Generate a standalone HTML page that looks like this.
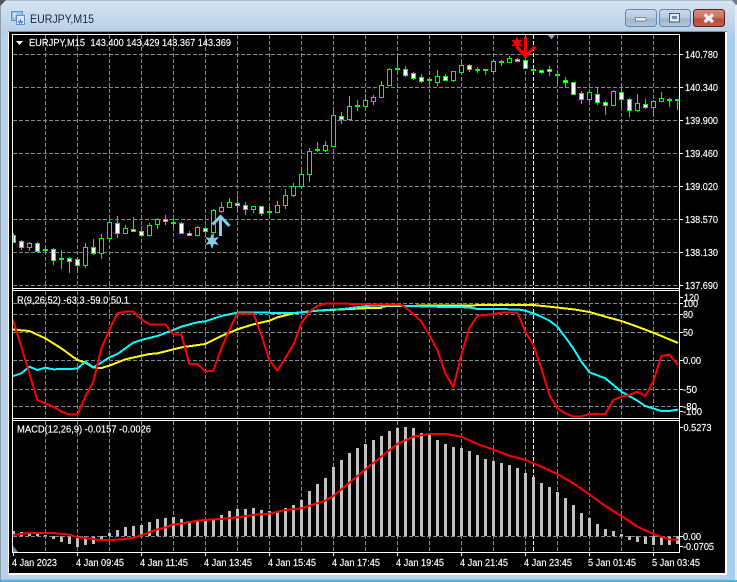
<!DOCTYPE html>
<html><head><meta charset="utf-8"><title>EURJPY,M15</title>
<style>
html,body{margin:0;padding:0;background:#b9d1ea;width:737px;height:582px;overflow:hidden}
svg{display:block}
text{font-family:"Liberation Sans",sans-serif;font-size:10.5px;fill:#fff;stroke:#fff;stroke-width:.15px}
.g{stroke:#778899;stroke-width:1;stroke-dasharray:4 2;fill:none}
.l{fill:none;stroke-linejoin:round;stroke-linecap:round;shape-rendering:crispEdges}
</style></head><body>
<svg width="737" height="582" viewBox="0 0 737 582" xmlns="http://www.w3.org/2000/svg">
<defs>
<linearGradient id="tb" x1="0" y1="0" x2="0" y2="1"><stop offset="0" stop-color="#d6e4f2"/><stop offset="1" stop-color="#b4cee8"/></linearGradient>
<linearGradient id="bt" x1="0" y1="0" x2="0" y2="1"><stop offset="0" stop-color="#cbdaea"/><stop offset=".5" stop-color="#b5cae0"/><stop offset=".55" stop-color="#9db5cf"/><stop offset="1" stop-color="#b0c7df"/></linearGradient>
<linearGradient id="cb" x1="0" y1="0" x2="0" y2="1"><stop offset="0" stop-color="#d98f82"/><stop offset=".5" stop-color="#c96e5e"/><stop offset=".55" stop-color="#b54e3c"/><stop offset="1" stop-color="#c2604c"/></linearGradient>
</defs>
<rect width="737" height="582" fill="#b9d1ea"/>
<rect x="1" y="1" width="734" height="33" fill="url(#tb)"/>
<path d="M0 6L5 0H732L736 5V580H0Z" fill="none" stroke="#9aa9b8"/>
<rect x="0" y="0" width="1" height="582" fill="#8f9dab"/>
<rect x="727" y="34" width="8" height="546" fill="#a9cdee"/>
<rect x="735" y="5" width="2" height="575" fill="#e8eef4"/>
<rect x="0" y="580" width="737" height="2" fill="#4ab6dc"/>
<path d="M0 0H6L0 6Z" fill="#555"/>
<path d="M732 0H737V5Z" fill="#777"/>

<rect x="8" y="31" width="719" height="544" fill="#fff"/>
<rect x="8" y="31" width="719" height="1" fill="#8a8f96"/>
<rect x="9" y="32" width="716" height="541" fill="#000"/>

<!-- title icon -->
<g>
<rect x="11.5" y="11.5" width="11" height="9" fill="#9cc3ea" stroke="#5f8fc4"/>
<rect x="16.5" y="15.5" width="8" height="9" fill="#dcebfa" stroke="#5f8fc4"/>
<path d="M18 21l1.5 2 1-3 1 3 1.5-2" stroke="#3f6fae" fill="none"/>
<path d="M13 14h3M13 16h2" stroke="#fff"/>
</g>
<text x="30" y="23" textLength="64" lengthAdjust="spacingAndGlyphs" style="font-size:11.5px;fill:#1c2a38;stroke:none">EURJPY,M15</text>

<!-- buttons -->
<rect x="625.5" y="9.5" width="31" height="17" rx="3" fill="url(#bt)" stroke="#6c88a6"/>
<rect x="635.5" y="17.5" width="10.500" height="3.5" fill="#e8eef4" stroke="#566a80" stroke-width=".7"/>
<rect x="659.5" y="9.5" width="31" height="17" rx="3" fill="url(#bt)" stroke="#6c88a6"/>
<rect x="669.5" y="13.5" width="10" height="8.5" fill="#dfe8f1" stroke="#4a5d72"/>
<rect x="672" y="16" width="5" height="3" fill="#6f88a5"/>
<rect x="693.5" y="9.5" width="31" height="17" rx="3" fill="url(#cb)" stroke="#5a1f1c"/>
<path d="M704.5 14.5l8.500 7.500M713 14.5l-8.500 7.500" stroke="#f3f3f3" stroke-width="3.2"/>

<!-- grid -->
<g class="g">
<path d="M13 54.5H679M13 87.5H679M13 120.5H679M13 153.5H679M13 186.5H679M13 219.5H679M13 252.5H679M13 285.5H679"/>
<path d="M13 303.5H679M13 314.5H679M13 332.5H679M13 360.5H679M13 389.5H679M13 406.5H679"/>
<path d="M13 536.5H679"/>
<path d="M45.5 35V288M77.5 35V288M109.5 35V288M141.5 35V288M173.5 35V288M205.5 35V288M237.5 35V288M269.5 35V288M301.5 35V288M333.5 35V288M365.5 35V288M397.5 35V288M429.5 35V288M461.5 35V288M493.5 35V288M525.5 35V288M557.5 35V288M589.5 35V288M621.5 35V288M653.5 35V288"/>
<path d="M45.5 291V418M77.5 291V418M109.5 291V418M141.5 291V418M173.5 291V418M205.5 291V418M237.5 291V418M269.5 291V418M301.5 291V418M333.5 291V418M365.5 291V418M397.5 291V418M429.5 291V418M461.5 291V418M493.5 291V418M525.5 291V418M557.5 291V418M589.5 291V418M621.5 291V418M653.5 291V418"/>
<path d="M45.5 421V552M77.5 421V552M109.5 421V552M141.5 421V552M173.5 421V552M205.5 421V552M237.5 421V552M269.5 421V552M301.5 421V552M333.5 421V552M365.5 421V552M397.5 421V552M429.5 421V552M461.5 421V552M493.5 421V552M525.5 421V552M557.5 421V552M589.5 421V552M621.5 421V552M653.5 421V552"/>
</g>
<path d="M533.5 35V288M533.5 291V418M533.5 421V552" stroke="#fff" stroke-dasharray="4 2" fill="none"/>

<!-- candle wicks -->
<path fill="none" stroke="#00ff00" d="M13.5 233V243M21.5 240V250M29.5 242V251M37.5 242V252M45.5 245V253M53.5 248V265M61.5 250V269M69.5 257V273M77.5 258V272M85.5 243V268M93.5 239V255M101.5 234V259M109.5 220V242M117.5 216V238M125.5 225V233M133.5 217V232M141.5 226V235M149.5 223V235M157.5 218V229M165.5 215V225M173.5 218V228M181.5 222V234M189.5 231V236M197.5 226V236M205.5 226V233M213.5 209V237M221.5 202V213M229.5 198V207M237.5 196V211M245.5 202V215M253.5 206V213M261.5 206V216M269.5 207V218M277.5 201V213M285.5 189V209M293.5 183V197M301.5 171V189M309.5 148V182M317.5 142V152M325.5 141V152M333.5 110V146M341.5 112V124M349.5 96V119M357.5 100V111M365.5 94V107M373.5 95V105M381.5 81V98M389.5 68V85M397.5 57V72M405.5 66V77M413.5 72V80M421.5 74V83M429.5 77V85M437.5 70V86M445.5 74V81M453.5 71V82M461.5 59V72M469.5 64V72M477.5 67V73M485.5 69V75M493.5 60V73M501.5 60V66M509.5 56V63M517.5 58V62M525.5 58V68M533.5 68V72M541.5 70V74M549.5 66V76M557.5 70V84M565.5 77V88M573.5 82V95M581.5 91V104M589.5 91V102M597.5 88V105M605.5 101V115M613.5 90V105M621.5 88V108M629.5 98V117M637.5 94V112M645.5 99V109M653.5 100V115M661.5 92V101M669.5 98V107M677.5 100V110"/>
<!-- bull bodies (hollow) -->
<path fill="#000" stroke="#00ff00" d="M27.5 243.5h4v4h-4zM83.5 247.5h4v18h-4zM99.5 238.5h4v15h-4zM107.5 222.5h4v16h-4zM123.5 228.5h4v5h-4zM147.5 225.5h4v10h-4zM155.5 219.5h4v5h-4zM195.5 227.5h4v8h-4zM211.5 210.5h4v22h-4zM219.5 207.5h4v4h-4zM227.5 202.5h4v5h-4zM251.5 206.5h4v3h-4zM275.5 205.5h4v7h-4zM283.5 195.5h4v10h-4zM291.5 186.5h4v9h-4zM299.5 174.5h4v12h-4zM307.5 151.5h4v23h-4zM323.5 145.5h4v5h-4zM331.5 115.5h4v31h-4zM347.5 106.5h4v13h-4zM363.5 100.5h4v6h-4zM371.5 97.5h4v4h-4zM379.5 85.5h4v12h-4zM387.5 69.5h4v16h-4zM435.5 76.5h4v6h-4zM451.5 71.5h4v9h-4zM459.5 65.5h4v7h-4zM491.5 61.5h4v10h-4zM507.5 58.5h4v4h-4zM587.5 92.5h4v7h-4zM611.5 91.5h4v14h-4zM635.5 103.5h4v7h-4zM651.5 101.5h4v6h-4zM659.5 98.5h4v3h-4z"/>
<!-- bear bodies (filled) -->
<path fill="#fff" stroke="#00ff00" d="M13.5 235.5h2v7h-2zM19.5 241.5h4v6h-4zM35.5 243.5h4v8h-4zM51.5 249.5h4v11h-4zM67.5 258.5h4v3h-4zM75.5 259.5h4v6h-4zM91.5 247.5h4v6h-4zM115.5 223.5h4v10h-4zM131.5 229.5h4v2h-4zM139.5 231.5h4v4h-4zM163.5 219.5h4v2h-4zM179.5 223.5h4v10h-4zM187.5 233.5h4v2h-4zM203.5 228.5h4v3h-4zM235.5 203.5h4v2h-4zM243.5 205.5h4v4h-4zM259.5 206.5h4v7h-4zM339.5 116.5h4v3h-4zM403.5 69.5h4v6h-4zM411.5 73.5h4v5h-4zM419.5 77.5h4v4h-4zM443.5 76.5h4v4h-4zM467.5 65.5h4v4h-4zM515.5 59.5h4v2h-4zM523.5 60.5h4v8h-4zM539.5 70.5h4v2h-4zM547.5 69.5h4v2h-4zM563.5 80.5h4v2h-4zM571.5 82.5h4v12h-4zM579.5 93.5h4v6h-4zM595.5 94.5h4v8h-4zM603.5 102.5h4v3h-4zM619.5 92.5h4v7h-4zM627.5 99.5h4v11h-4zM643.5 104.5h4v3h-4z"/>
<!-- doji -->
<path fill="none" stroke="#00ff00" stroke-width="2" d="M43 250h5M59 259h5M171 223h5M267 212h5M315 150h5M355 106h5M395 69h5M427 80h5M475 70h5M483 70h5M499 62h5M531 70h5M555 75h5M667 100h5M675 100h5"/>

<!-- arrows -->
<g fill="none" stroke="#87ceeb" stroke-width="3">
<path d="M220.5 236V216M212.5 224.5L220.5 216.5L229.5 226"/>
</g>
<polygon fill="#87ceeb" points="212,233 213.75,238 218.9,237 215.5,241 218.9,245 213.75,244 212,249 210.25,244 205.1,245 208.5,241 205.1,237 210.25,238"/>
<g fill="none" stroke="#ff0000" stroke-width="3">
<path d="M525.5 37V57M516.5 46.5L525.5 56.5L535 46.5"/>
</g>
<polygon fill="#ff0000" points="517,36 518.5,40.4 523.1,39.5 520,43 523.1,46.5 518.5,45.6 517,50 515.5,45.6 510.9,46.5 514,43 510.9,39.5 515.5,40.4"/>
<path d="M547 34H556L551.5 39.5Z" fill="#8a96a3"/>

<!-- panel 1 lines -->
<g class="l" stroke-width="6" transform="translate(0,280) scale(.33333)">
<polyline stroke="#ffff00" points="40,149 88,153 136,175 184,205 232,240 256,248 280,263 304,264 328,257 376,238 448,222 472,220 544,202 616,192 664,168 712,148 760,133 808,122 832,112 880,100 952,92 1110,84 1144,84 1144,79 1264,77 1410,76 1480,75 1600,75 1648,80 1720,88 1768,96 1816,110 1864,123 1912,140 1960,158 2008,178 2032,188"/>
<polyline stroke="#00ffff" points="40,288 64,280 88,260 112,270 136,263 160,268 232,266 256,245 280,262 304,248 328,232 352,222 376,205 400,188 424,180 472,168 520,150 544,140 592,127 616,124 664,108 712,98 784,98 880,99 976,90 1030,87 1110,77 1200,77 1336,81 1408,82 1432,87 1552,88 1576,92 1600,100 1624,110 1648,122 1672,140 1696,172 1720,205 1744,245 1768,277 1816,295 1864,335 1912,362 1936,378 1984,393 2008,393 2032,389"/>
<polyline stroke="#ff0000" points="40,122 64,200 88,280 112,360 136,370 160,380 184,395 208,404 232,404 256,350 280,305 304,205 328,150 352,100 376,95 400,95 424,118 448,133 496,133 520,163 544,163 568,252 592,252 616,275 640,272 664,205 688,150 712,100 760,100 784,165 808,240 832,272 880,195 904,130 928,95 952,78 976,70 1000,70 1110,73 1200,73 1216,82 1240,102 1264,125 1288,165 1312,210 1336,280 1360,322 1384,225 1408,145 1432,108 1480,102 1504,98 1552,98 1576,155 1600,195 1624,265 1648,345 1672,385 1696,400 1720,410 1744,410 1768,402 1816,402 1840,360 1864,350 1888,345 1912,335 1936,348 1960,305 1984,228 2008,224 2032,252"/>
</g>

<!-- MACD histogram -->
<path fill="none" stroke="#c0c0c0" stroke-width="3" d="M13.5 531V536M21.5 532V536M29.5 533V536M37.5 533V536M45.5 535V536M53.5 536V539M61.5 536V542M69.5 536V544M77.5 536V547M85.5 536V545M93.5 536V544M101.5 536V539M109.5 533V536M117.5 530V536M125.5 527V536M133.5 526V536M141.5 525V536M149.5 522V536M157.5 519V536M165.5 518V536M173.5 517V536M181.5 519V536M189.5 521V536M197.5 521V536M205.5 521V536M213.5 519V536M221.5 515V536M229.5 511V536M237.5 509V536M245.5 509V536M253.5 508V536M261.5 510V536M269.5 511V536M277.5 511V536M285.5 508V536M293.5 505V536M301.5 500V536M309.5 491V536M317.5 484V536M325.5 478V536M333.5 467V536M341.5 460V536M349.5 453V536M357.5 448V536M365.5 444V536M373.5 440V536M381.5 436V536M389.5 431V536M397.5 428V536M405.5 427V536M413.5 428V536M421.5 433V536M429.5 434V536M437.5 440V536M445.5 444V536M453.5 447V536M461.5 448V536M469.5 451V536M477.5 455V536M485.5 459V536M493.5 461V536M501.5 463V536M509.5 465V536M517.5 468V536M525.5 473V536M533.5 477V536M541.5 483V536M549.5 487V536M557.5 492V536M565.5 498V536M573.5 505V536M581.5 513V536M589.5 518V536M597.5 524V536M605.5 529V536M613.5 531V536M621.5 534V536M629.5 536V540M637.5 536V542M645.5 536V544M653.5 536V545M661.5 536V545M669.5 536V545M677.5 536V544"/>
<path class="g" d="M13 536.5H679"/>
<polyline class="l" stroke="#ff0000" stroke-width="6" transform="translate(0,430) scale(.33333)" points="40,315 64,312 88,309 160,309 208,314 232,322 280,327 304,330 360,329 400,323 424,316 472,298 496,293 520,283 544,281 592,272 640,268 664,267 712,262 760,255 808,251 856,240 904,235 952,220 976,212 1000,198 1048,158 1110,107 1144,80 1192,42 1240,20 1288,12 1336,12 1384,20 1432,42 1480,59 1528,77 1576,90 1624,110 1672,132 1720,160 1768,193 1816,228 1864,258 1912,290 1960,312 2008,328 2032,329"/>
<path d="M13 546L18 552H13Z" fill="#778899"/>

<!-- frame -->
<rect x="9" y="32" width="3" height="541" fill="#000"/>
<path d="M12.5 34.5H679.5V552.5H12.5Z" fill="none" stroke="#fff"/>
<path d="M12 288.5H680M12 290.5H680M12 418.5H680M12 420.5H680" stroke="#fff"/>
<rect x="680" y="35" width="45" height="517" fill="#000"/>
<path d="M680 54.5h3M680 87.5h3M680 120.5h3M680 153.5h3M680 186.5h3M680 219.5h3M680 252.5h3M680 285.5h3M680 297.5h3M680 303.5h3M680 314.5h3M680 332.5h3M680 360.5h3M680 389.5h3M680 406.5h3M680 411.5h3M680 427.5h3M680 536.5h3M680 546.5h3" stroke="#fff"/>
<path d="M13.5 553v3M77.5 553v3M141.5 553v3M205.5 553v3M269.5 553v3M333.5 553v3M397.5 553v3M461.5 553v3M525.5 553v3M589.5 553v3M653.5 553v3" stroke="#fff"/>

<!-- header texts -->
<path d="M16 41H23L19.5 45Z" fill="#fff"/>
<text x="29" y="46" textLength="56" lengthAdjust="spacingAndGlyphs">EURJPY,M15</text>
<text x="90.5" y="46" textLength="140.500" lengthAdjust="spacingAndGlyphs">143.400 143,429 143.367 143.369</text>
<text x="17" y="303.500" textLength="112" lengthAdjust="spacingAndGlyphs">R(9,26,52) -63.3 -59.0 50.1</text>
<text x="17" y="432.500" textLength="134" lengthAdjust="spacingAndGlyphs">MACD(12,26,9) -0.0157 -0.0026</text>

<!-- price labels -->
<g>
<text x="685" y="58" textLength="33" lengthAdjust="spacingAndGlyphs">140.780</text>
<text x="685" y="91" textLength="33" lengthAdjust="spacingAndGlyphs">140.340</text>
<text x="685" y="124" textLength="33" lengthAdjust="spacingAndGlyphs">139.900</text>
<text x="685" y="157" textLength="33" lengthAdjust="spacingAndGlyphs">139.460</text>
<text x="685" y="190" textLength="33" lengthAdjust="spacingAndGlyphs">139.020</text>
<text x="685" y="223" textLength="33" lengthAdjust="spacingAndGlyphs">138.570</text>
<text x="685" y="256" textLength="33" lengthAdjust="spacingAndGlyphs">138.130</text>
<text x="685" y="289" textLength="33" lengthAdjust="spacingAndGlyphs">137.690</text>
<text x="684" y="301" textLength="15" lengthAdjust="spacingAndGlyphs">120</text>
<text x="683" y="307" textLength="15" lengthAdjust="spacingAndGlyphs">100</text>
<text x="683" y="318" textLength="10" lengthAdjust="spacingAndGlyphs">80</text>
<text x="683" y="336" textLength="10" lengthAdjust="spacingAndGlyphs">50</text>
<text x="683" y="364" textLength="18" lengthAdjust="spacingAndGlyphs">0.00</text>
<text x="683" y="393" textLength="14" lengthAdjust="spacingAndGlyphs">-50</text>
<text x="683" y="410" textLength="14" lengthAdjust="spacingAndGlyphs">-80</text>
<text x="683" y="415" textLength="19" lengthAdjust="spacingAndGlyphs">-100</text>
<text x="683.500" y="431" textLength="28" lengthAdjust="spacingAndGlyphs">0.5273</text>
<text x="683" y="540" textLength="18" lengthAdjust="spacingAndGlyphs">0.00</text>
<text x="683" y="550" textLength="31" lengthAdjust="spacingAndGlyphs">-0.0705</text>
</g>
<!-- time labels -->
<g>
<text x="12" y="566" textLength="45" lengthAdjust="spacingAndGlyphs">4 Jan 2023</text>
<text x="76" y="566" textLength="48" lengthAdjust="spacingAndGlyphs">4 Jan 09:45</text>
<text x="140" y="566" textLength="48" lengthAdjust="spacingAndGlyphs">4 Jan 11:45</text>
<text x="204" y="566" textLength="48" lengthAdjust="spacingAndGlyphs">4 Jan 13:45</text>
<text x="268" y="566" textLength="48" lengthAdjust="spacingAndGlyphs">4 Jan 15:45</text>
<text x="332" y="566" textLength="48" lengthAdjust="spacingAndGlyphs">4 Jan 17:45</text>
<text x="396" y="566" textLength="48" lengthAdjust="spacingAndGlyphs">4 Jan 19:45</text>
<text x="460" y="566" textLength="48" lengthAdjust="spacingAndGlyphs">4 Jan 21:45</text>
<text x="524" y="566" textLength="48" lengthAdjust="spacingAndGlyphs">4 Jan 23:45</text>
<text x="588" y="566" textLength="48" lengthAdjust="spacingAndGlyphs">5 Jan 01:45</text>
<text x="652" y="566" textLength="48" lengthAdjust="spacingAndGlyphs">5 Jan 03:45</text>
</g>
</svg>
</body></html>
